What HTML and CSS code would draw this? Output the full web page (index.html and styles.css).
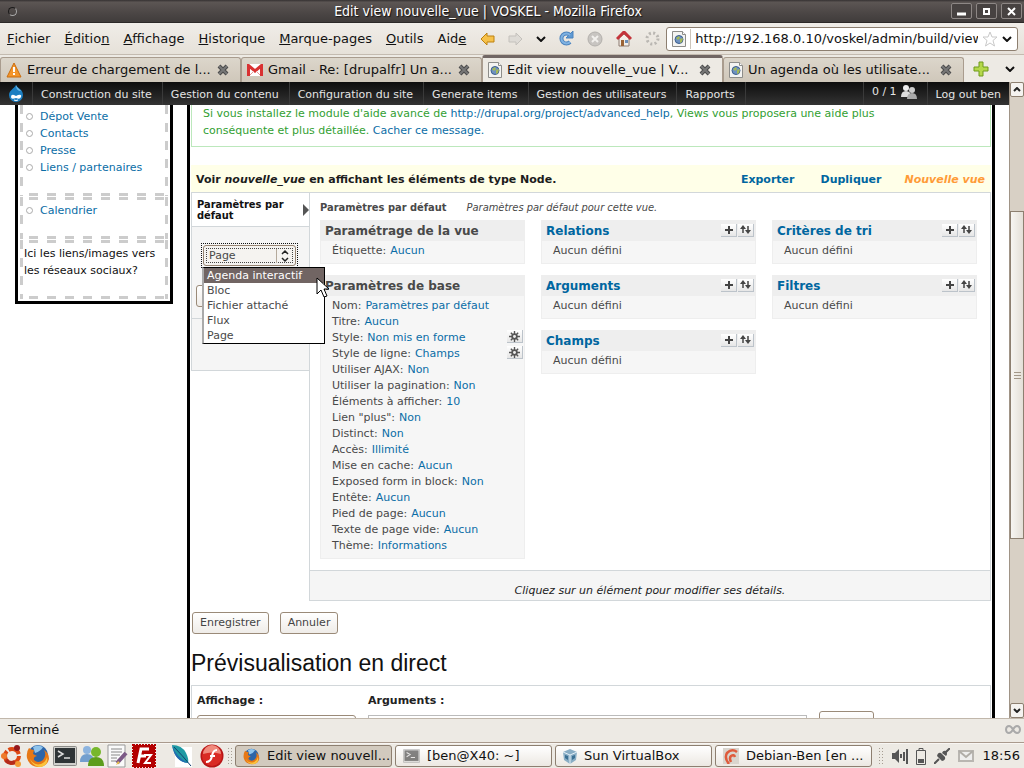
FILE: index.html
```html
<!DOCTYPE html>
<html lang="fr">
<head>
<meta charset="utf-8">
<title>Edit view nouvelle_vue | VOSKEL</title>
<link rel="stylesheet" href="styles.css">
</head>
<body>
<svg class="defs" aria-hidden="true">
  <symbol id="close" viewBox="0 0 12 12"><path d="M2 2l8 8M10 2l-8 8" stroke="#4b4b4b" stroke-width="4"/><path d="M2 2l8 8M10 2l-8 8" stroke="#777" stroke-width="2"/></symbol>
  <symbol id="chevron" viewBox="0 0 10 6"><path d="M1 1l4 4 4-4" fill="none" stroke="#111" stroke-width="2"/></symbol>
  <symbol id="globe" viewBox="0 0 14 16"><path d="M.5.5h10l3 3v12H.5z" fill="#f4f4f2" stroke="#8d8d8a"/><path d="M10.500 0.500v3h3" fill="#fff" stroke="#8d8d8a"/><circle cx="7" cy="8.500" r="4" fill="#6f92c0" stroke="#3c5f90"/><path d="M4 7l3-2 1 2-2 2zM8 8l3-1-1 4-2 1z" fill="#a5b957"/></symbol>
  <symbol id="gear" viewBox="0 0 12 12"><path d="M6 0v12M0 6h12M2 2l8 8M10 2l-8 8" stroke="#555" stroke-width="1.500"/><circle cx="6" cy="6" r="3.500" fill="#555"/><circle cx="6" cy="6" r="1.600" fill="#eee"/></symbol>
  <symbol id="add" viewBox="0 0 8 8"><path d="M4 0v8M0 4h8" stroke="#444" stroke-width="2"/></symbol>
  <symbol id="sort" viewBox="0 0 11 9"><path d="M3 8V2M8 1v6" stroke="#444" stroke-width="1.500"/><path d="M0 4l3-4 3 4zM5 5l3 4 3-4z" fill="#444"/></symbol>
  <symbol id="firefox" viewBox="0 0 24 24"><circle cx="12" cy="11" r="10" fill="#2d65a8"/><path d="M7 3q5-3 10 0-2 4-8 6z" fill="#8fc4ec"/><path d="M3 4q2 2 5 2l-1 4 4 2q-4 1-3 4 4 4 9 0 4-5 1-10 5 3 5 9-2 8-11 8-9-1-11-9Q0 8 3 4z" fill="#e77816"/><path d="M4 15q4 7 11 5 5-2 6-7 2 8-6 10-8 0-11-8z" fill="#fbc33c"/></symbol>
  <symbol id="terminal" viewBox="0 0 24 20"><rect x=".5" y=".5" width="23" height="19" rx="1" fill="#cfcfcb" stroke="#8b8b88"/><rect x="2" y="2" width="20" height="15" fill="#2e3436"/><path d="M5 5l5 3-5 3M11 12h6" fill="none" stroke="#ddd" stroke-width="1.500"/></symbol>
</svg>

<header class="titlebar">
  <span class="dot"></span>
  <h1>Edit view nouvelle_vue | VOSKEL - Mozilla Firefox</h1>
  <div class="winbtns">
    <button aria-label="Réduire"><svg width="9" height="9"><path d="M0 7h9" stroke="#fff" stroke-width="3"/></svg></button>
    <button aria-label="Agrandir"><svg width="9" height="9"><rect x="2" y="2" width="5" height="5" fill="none" stroke="#fff" stroke-width="2"/></svg></button>
    <button aria-label="Fermer"><svg width="9" height="9"><path d="M1 1l7 7M8 1l-7 7" stroke="#fff" stroke-width="2"/></svg></button>
  </div>
</header>

<nav class="menubar">
  <button><u>F</u>ichier</button><button><u>É</u>ditio<u>n</u></button><button><u>A</u>ffichage</button><button><u>H</u>istorique</button><button><u>M</u>arque-pages</button><button><u>O</u>utils</button><button>Aid<u>e</u></button>
  <div class="tools">
    <button aria-label="Précédent"><svg width="15" height="14" viewBox="0 0 15 14"><path d="M7 1L1 7l6 6v-3h7V4H7z" fill="#f6c14a" stroke="#bd8110"/></svg></button>
    <button aria-label="Suivant"><svg width="15" height="14" viewBox="0 0 15 14"><path d="M8 1l6 6-6 6v-3H1V4h7z" fill="#dedbd6" stroke="#c4c1bc"/></svg></button>
    <button aria-label="Pages récentes"><svg width="10" height="6"><use href="#chevron"/></svg></button>
    <button aria-label="Actualiser"><svg width="15" height="15" viewBox="0 0 15 15"><path d="M11 11a5 5 0 1 1 0-7" fill="none" stroke="#4c83bd" stroke-width="4"/><path d="M14 0v7H7z" fill="#5f9ad4" stroke="#4c83bd"/><path d="M11 11a5 5 0 1 1 0-7" fill="none" stroke="#7fb2e2" stroke-width="2"/></svg></button>
    <button aria-label="Arrêter"><svg width="16" height="16" viewBox="0 0 16 16"><circle cx="8" cy="8" r="7" fill="#c8c5c1" stroke="#b3b0ac"/><path d="M5 5l6 6M11 5l-6 6" stroke="#f2f0ed" stroke-width="2"/></svg></button>
    <button aria-label="Accueil"><svg width="16" height="16" viewBox="0 0 16 16"><path d="M3 7v8h10V7L8 3z" fill="#f3efe9" stroke="#8d7b70"/><path d="M1 8l7-7 7 7" fill="none" stroke="#c4343b" stroke-width="3"/><path d="M5 9h3v6H5z" fill="#9a6335"/><path d="M9 9h3v3H9z" fill="#6c8fb8"/></svg></button>
    <svg width="15" height="15" viewBox="0 0 15 15"><circle cx="7.500" cy="7.500" r="5.500" fill="none" stroke="#bab7b2" stroke-width="3" stroke-dasharray="2 2.320"/></svg>
  </div>
  <div class="urlbar">
    <svg width="14" height="16"><use href="#globe"/></svg>
    <input type="text" aria-label="Adresse" value="http://192.168.0.10/voskel/admin/build/view">
    <svg width="16" height="16" viewBox="0 0 16 16"><path d="M8 1l2 5h5l-4 3.500 1.500 5.500L8 12l-4.500 3L5 9.500 1 6h5z" fill="#fff" stroke="#c9c9c9"/></svg>
    <svg width="10" height="6"><use href="#chevron"/></svg>
  </div>
</nav>

<nav class="tabs">
  <div class="tab"><svg width="16" height="16" viewBox="0 0 16 16"><path d="M8 1l7 14H1z" fill="#f3952b" stroke="#c96d10" stroke-linejoin="round"/><path d="M8 5v5M8 11v2" stroke="#fff" stroke-width="2"/></svg><a href="#">Erreur de chargement de l...</a><button aria-label="Fermer l'onglet"><svg width="12" height="12"><use href="#close"/></svg></button></div>
  <div class="tab"><svg width="16" height="12" viewBox="0 0 16 12"><path d="M0 0h16v12H0z" fill="#fff"/><path d="M1.500 12V1.500L8 7l6.500-5.500V12" fill="none" stroke="#d93232" stroke-width="3"/><path d="M3 11l4-4M13 11L9 7" stroke="#e79a9a"/></svg><a href="#">Gmail - Re: [drupalfr] Un a...</a><button aria-label="Fermer l'onglet"><svg width="12" height="12"><use href="#close"/></svg></button></div>
  <div class="tab active"><svg width="14" height="16"><use href="#globe"/></svg><a href="#">Edit view nouvelle_vue | V...</a><button aria-label="Fermer l'onglet"><svg width="12" height="12"><use href="#close"/></svg></button></div>
  <div class="tab"><svg width="14" height="16"><use href="#globe"/></svg><a href="#">Un agenda où les utilisate...</a><button aria-label="Fermer l'onglet"><svg width="12" height="12"><use href="#close"/></svg></button></div>
  <div class="tabend">
    <button aria-label="Nouvel onglet"><svg width="16" height="16" viewBox="0 0 16 16"><path d="M6 1h4v5h5v4h-5v5H6v-5H1V6h5z" fill="#b5d84b" stroke="#6f9a1c"/></svg></button>
    <button aria-label="Liste des onglets"><svg width="10" height="6"><use href="#chevron"/></svg></button>
  </div>
</nav>

<div class="viewport">
  <div class="page">
    <nav class="admin">
      <a class="drop" href="#" aria-label="Accueil"><svg width="16" height="17" viewBox="0 0 16 17"><path d="M8 0c1 3 7 4 7 10a7 7 0 0 1-14 0C1 5 6 4 8 0z" fill="#1c7fc2"/><path d="M8 0c1 3 4 4 5 6-3 0-5-2-5-6z" fill="#6db9e6"/><path d="M3 12q0-3 3-2l2 1 2-1q4-1 3 2-1 3-5 1-5 2-5-1z" fill="#fff"/><path d="M6 15q2 1 4 0" fill="none" stroke="#fff"/></svg></a>
      <a href="#">Construction du site</a><a href="#">Gestion du contenu</a><a href="#">Configuration du site</a><a href="#">Generate items</a><a href="#">Gestion des utilisateurs</a><a href="#">Rapports</a>
      <span class="fill"></span>
      <a class="users" href="#">0 / 1 <svg width="16" height="14" viewBox="0 0 16 14"><circle cx="5" cy="3" r="3" fill="#eee"/><path d="M0 12q0-6 5-6t5 6z" fill="#ddd"/><circle cx="11" cy="5" r="3" fill="#ccc"/><path d="M6 14q0-6 5-6t5 6z" fill="#aaa"/></svg></a>
      <a href="#">Log out ben</a>
    </nav>
    <div class="cols">
      <aside>
        <div class="block links"><ul><li><a href="#">Dépot Vente</a></li><li><a href="#">Contacts</a></li><li><a href="#">Presse</a></li><li><a href="#">Liens / partenaires</a></li></ul></div>
        <div class="block cal"><ul><li><a href="#">Calendrier</a></li></ul></div>
        <div class="block social"><p>Ici les liens/images vers les réseaux sociaux?</p></div>
      </aside>
      <main>
        <p class="message">Si vous installez le module d'aide avancé de <a href="#">http://drupal.org/project/advanced_help</a>, Views vous proposera une aide plus conséquente et plus détaillée. <a href="#">Cacher ce message.</a></p>
        <div class="viewhead"><strong>Voir <em>nouvelle_vue</em> en affichant les éléments de type Node.</strong><a href="#">Exporter</a><a href="#">Dupliquer</a><em class="new">Nouvelle vue</em></div>
        <div class="editor">
          <div class="displays">
            <a class="current" href="#"><span>Paramètres par défaut</span><svg width="6" height="12"><path d="M0 0l6 6-6 6z" fill="#555"/></svg></a>
            <div class="adddisplay">
              <div class="combo">
                <select aria-label="Type d'affichage"><option>Page</option><option>Agenda interactif</option><option>Bloc</option><option>Fichier attaché</option><option>Flux</option></select>
                <svg class="updown" width="17" height="14" viewBox="0 0 17 14"><path d="M.5 0v14" stroke="#b5aa9c"/><path d="M6 5l3-3 3 3M6 9l3 3 3-3" fill="none" stroke="#222" stroke-width="1.500"/></svg>
                <ul class="options" role="listbox" aria-label="Types"><li class="hover" role="option">Agenda interactif</li><li role="option">Bloc</li><li role="option">Fichier attaché</li><li role="option">Flux</li><li role="option">Page</li></ul>
                <svg class="cursor" width="13" height="21" viewBox="0 0 13 21"><path d="M1 1v16l4-4 3 7 3-1-3-7h5z" fill="#fff" stroke="#000"/></svg>
              </div>
              <button class="btn add" aria-label="Ajouter un affichage"></button>
            </div>
            <div class="blank"></div>
          </div>
          <div class="details">
            <p class="dtitle"><strong>Paramètres par défaut</strong><em>Paramètres par défaut pour cette vue.</em></p>
            <div class="grid">
              <div class="col">
                <section><h2>Paramétrage de la vue</h2><ul><li>Étiquette: <a href="#">Aucun</a></li></ul></section>
                <section><h2>Paramètres de base</h2><ul>
                  <li>Nom: <a href="#">Paramètres par défaut</a></li>
                  <li>Titre: <a href="#">Aucun</a></li>
                  <li>Style: <a href="#">Non mis en forme</a><button class="ib" aria-label="Réglages du style"><svg width="11" height="11"><use href="#gear"/></svg></button></li>
                  <li>Style de ligne: <a href="#">Champs</a><button class="ib" aria-label="Réglages du style de ligne"><svg width="11" height="11"><use href="#gear"/></svg></button></li>
                  <li>Utiliser AJAX: <a href="#">Non</a></li>
                  <li>Utiliser la pagination: <a href="#">Non</a></li>
                  <li>Éléments à afficher: <a href="#">10</a></li>
                  <li>Lien "plus": <a href="#">Non</a></li>
                  <li>Distinct: <a href="#">Non</a></li>
                  <li>Accès: <a href="#">Illimité</a></li>
                  <li>Mise en cache: <a href="#">Aucun</a></li>
                  <li>Exposed form in block: <a href="#">Non</a></li>
                  <li>Entête: <a href="#">Aucun</a></li>
                  <li>Pied de page: <a href="#">Aucun</a></li>
                  <li>Texte de page vide: <a href="#">Aucun</a></li>
                  <li>Thème: <a href="#">Informations</a></li>
                </ul></section>
              </div>
              <div class="col">
                <section><h2><a href="#">Relations</a><span><button class="ib" aria-label="Ajouter"><svg width="8" height="8"><use href="#add"/></svg></button><button class="ib" aria-label="Réordonner"><svg width="11" height="9"><use href="#sort"/></svg></button></span></h2><ul><li>Aucun défini</li></ul></section>
                <section><h2><a href="#">Arguments</a><span><button class="ib" aria-label="Ajouter"><svg width="8" height="8"><use href="#add"/></svg></button><button class="ib" aria-label="Réordonner"><svg width="11" height="9"><use href="#sort"/></svg></button></span></h2><ul><li>Aucun défini</li></ul></section>
                <section><h2><a href="#">Champs</a><span><button class="ib" aria-label="Ajouter"><svg width="8" height="8"><use href="#add"/></svg></button><button class="ib" aria-label="Réordonner"><svg width="11" height="9"><use href="#sort"/></svg></button></span></h2><ul><li>Aucun défini</li></ul></section>
              </div>
              <div class="col">
                <section><h2><a href="#">Critères de tri</a><span><button class="ib" aria-label="Ajouter"><svg width="8" height="8"><use href="#add"/></svg></button><button class="ib" aria-label="Réordonner"><svg width="11" height="9"><use href="#sort"/></svg></button></span></h2><ul><li>Aucun défini</li></ul></section>
                <section><h2><a href="#">Filtres</a><span><button class="ib" aria-label="Ajouter"><svg width="8" height="8"><use href="#add"/></svg></button><button class="ib" aria-label="Réordonner"><svg width="11" height="9"><use href="#sort"/></svg></button></span></h2><ul><li>Aucun défini</li></ul></section>
              </div>
            </div>
            <p class="hint">Cliquez sur un élément pour modifier ses détails.</p>
          </div>
        </div>
        <div class="actions"><button class="btn">Enregistrer</button><button class="btn">Annuler</button></div>
        <h2 class="preview">Prévisualisation en direct</h2>
        <form class="live">
          <div class="f1"><label for="aff">Affichage :</label><select id="aff" class="btn" aria-label="Affichage"></select></div>
          <div class="f2"><label for="args">Arguments :</label><input id="args" type="text"></div>
          <button type="button" class="btn f3" aria-label="Aperçu"></button>
        </form>
      </main>
    </div>
  </div>
  <div class="scroll">
    <button aria-label="Défiler vers le haut"><svg width="8" height="5"><path d="M1 4l3-3 3 3" fill="none" stroke="#222" stroke-width="2"/></svg></button>
    <div class="track"><div class="thumb"><i></i><i></i><i></i></div></div>
    <button aria-label="Défiler vers le bas"><svg width="8" height="5"><path d="M1 1l3 3 3-3" fill="none" stroke="#222" stroke-width="2"/></svg></button>
  </div>
</div>

<footer class="status"><span>Terminé</span><svg width="16" height="9" viewBox="0 0 16 9"><path d="M8 4.500C6 1 5 1 4 1a3 3.500 0 0 0 0 7c1 0 2 0 4-3.500S11 1 12 1a3 3.500 0 0 1 0 7c-1 0-2 0-4-3.500z" fill="none" stroke="#aaa" stroke-width="2"/></svg></footer>

<nav class="taskbar">
  <div class="launch">
    <svg width="23" height="24" viewBox="0 0 23 24"><circle cx="12" cy="12" r="7" fill="none" stroke="#dd4814" stroke-width="4" stroke-dasharray="12.600 2"/><path d="M15 18a7 7 0 0 1-9-2" fill="none" stroke="#b52b1c" stroke-width="4"/><circle cx="4" cy="12" r="3" fill="#ee7b2c"/><circle cx="17" cy="4" r="3" fill="#93171c"/><circle cx="18" cy="20" r="3" fill="#f39a34"/></svg>
    <svg width="24" height="24"><use href="#firefox"/></svg>
    <svg width="24" height="20"><use href="#terminal"/></svg>
    <svg width="24" height="22" viewBox="0 0 24 22"><circle cx="7" cy="5" r="4" fill="#8db4df"/><path d="M0 17q0-8 7-8t7 8z" fill="#739fce"/><circle cx="16" cy="7" r="5" fill="#77b72c"/><path d="M8 21q0-9 8-9t8 9z" fill="#5d9d1c"/></svg>
    <svg width="22" height="24" viewBox="0 0 22 24"><path d="M1 1h17v22H1z" fill="#fafafa" stroke="#999"/><path d="M4 5h11M4 8h11M4 11h9M4 14h6M4 17h5" stroke="#888"/><path d="M19 9L10 19" stroke="#7c5a86" stroke-width="4"/><path d="M11 17l-2 4 4-2z" fill="#e8c34a"/></svg>
    <svg width="24" height="24" viewBox="0 0 24 24"><path d="M1 1h22v22H1z" fill="#b30000" stroke="#b30000" stroke-width="2" stroke-dasharray="2 1"/><path d="M6 19L9 5h8M8 12h6" fill="none" stroke="#fff" stroke-width="3"/><path d="M12 11h7l-6 8h6" fill="none" stroke="#fff" stroke-width="2"/></svg>
    <svg class="gap" width="22" height="24" viewBox="0 0 22 24"><path d="M4 3h17v20H4z" fill="#fff"/><path d="M1 1q10 0 14 8 3 6 2 10Q4 18 1 1z" fill="#1e9aa4"/><path d="M1 1q4 12 16 18Q4 18 1 1z" fill="#2369b0"/><path d="M3 3q8 8 17 19" fill="none" stroke="#123f6e"/></svg>
    <svg width="24" height="24" viewBox="0 0 24 24"><circle cx="12" cy="12" r="11.500" fill="#b81516"/><circle cx="12" cy="12" r="10" fill="#d92b24"/><path d="M3 10a9 9 0 0 1 18 0q-9-3-18 0z" fill="#f08a7c"/><path d="M17 6q-4 0-5 6t-6 6M10 12h5" fill="none" stroke="#fff" stroke-width="2"/></svg>
    <span class="grip"></span>
  </div>
  <div class="tasks">
    <button class="on"><svg width="17" height="17"><use href="#firefox"/></svg>Edit view nouvell...</button>
    <button><svg class="gray" width="17" height="14"><use href="#terminal"/></svg>[ben@X40: ~]</button>
    <button><svg width="14" height="15" viewBox="0 0 14 15"><path d="M7 0l7 3-1 8-6 4-6-4L0 3z" fill="#89adc4"/><path d="M0 3l7 3 7-3M7 6v9" stroke="#e4eff6" fill="none"/><path d="M2 6l3 1v4l-3-2zM12 6L9 7v4l3-2z" fill="#3b7093"/></svg>Sun VirtualBox</button>
    <button><svg width="16" height="16" viewBox="0 0 16 16"><path d="M0 0h16v16H0z" fill="#d9d5ce"/><path d="M6 16Q1 10 4 5q5-5 10-1M8 14q-2-4 0-6 3-2 4 1" fill="none" stroke="#df5b3c" stroke-width="2.500"/></svg>Debian-Ben [en ...</button>
  </div>
  <div class="tray">
    <span class="grip"></span>
    <svg width="16" height="16" viewBox="0 0 16 16"><path d="M0 5h3l4-4v14l-4-4H0z" fill="#555"/><path d="M9 6v4M12 4v9M15 1v15" stroke="#555" stroke-width="2"/></svg>
    <svg width="10" height="17" viewBox="0 0 10 17"><path d="M.5 2.500h9v14h-9zM3 2V.5h4V2" fill="none" stroke="#555"/><path d="M2 11h6v4H2z" fill="#555"/></svg>
    <svg width="16" height="16" viewBox="0 0 16 16"><path d="M0 16l5-5M16 0l-5 5" stroke="#555" stroke-width="2"/><path d="M3 8l5 5q4-1 3-4L7 5q-3-1-4 3zM8 5q1-3 4-2 2 3 0 5z" fill="#555"/></svg>
    <svg width="16" height="12" viewBox="0 0 16 12"><path d="M1 1h14v10H1z" fill="#eee" stroke="#b9b6b1" stroke-width="2"/><path d="M1 1l7 6 7-6" fill="none" stroke="#b0ada8" stroke-width="2"/></svg>
    <time>18:56</time>
  </div>
</nav>
</body>
</html>
```
FILE: styles.css
```css
*, *::before { box-sizing: border-box; }
html, body { height: 100%; }
body { margin: 0; display: flex; flex-direction: column; overflow: hidden; background: #edeae4; color: #111; font: 11px/16px "DejaVu Sans", sans-serif; }
button, input, select { font: inherit; color: inherit; margin: 0; }
button { padding: 0; border: 0; background: none; display: flex; align-items: center; justify-content: center; white-space: nowrap; }
svg { display: block; flex: none; }
ul, p, h1, h2 { margin: 0; padding: 0; list-style: none; }
a { color: #0a6da6; text-decoration: none; }
.defs { width: 0; height: 0; position: absolute; }

.titlebar { flex: none; height: 23px; display: flex; align-items: center; padding: 0 2px 0 8px; background: linear-gradient(#353132, #5c5654 10%, #4b4645 60%, #403c3b); border-bottom: 1px solid #2c2928; }
.titlebar h1 { flex: 1; padding-left: 8px; text-align: center; color: #fff; font: 14px/20px "DejaVu Sans Condensed", "DejaVu Sans", sans-serif; text-shadow: 1px 1px 1px #111; }
.dot { width: 9px; height: 9px; border: 1px solid #999; border-color: #1c1b1b #aaa #aaa #1c1b1b; border-radius: 50%; }
.winbtns { display: flex; gap: 4px; }
.winbtns button { width: 21px; height: 16px; border: 1px solid #8d8785; border-radius: 2px; background: #474241; }

.menubar { flex: none; height: 32px; display: flex; align-items: center; gap: 14px; padding: 0 6px 0 7px; background: linear-gradient(#f0ede8, #e6e1d9); border-bottom: 1px solid #c4bbb0; font-size: 13px; line-height: 20px; }
.tools { display: flex; align-items: center; gap: 13px; }
.urlbar { flex: 1; min-width: 0; height: 24px; margin-left: -8px; padding: 0 5px; display: flex; align-items: center; gap: 4px; border: 1px solid #8d7f70; border-radius: 3px; background: #fff; }
.urlbar input { flex: 1; min-width: 0; height: 20px; padding: 0 0 0 4px; border: 0; border-left: 1px solid #ccc5bb; background: none; outline: 0; }

.tabs { flex: none; height: 27px; display: flex; align-items: stretch; font-size: 13px; line-height: 22px; }
.tab { flex: 1; min-width: 0; margin-top: 2px; display: flex; align-items: center; gap: 5px; padding: 0 11px 0 5px; background: linear-gradient(#dcd6cb, #cfc7ba); border: 1px solid #a99c8e; border-bottom: 0; border-radius: 3px 3px 0 0; }
.tab a { flex: 1; color: #111; white-space: nowrap; }
.tab.active { margin-top: 0; background: #edeae4; border-top: 3px solid #716664; }
.tabend { flex: none; width: 60px; display: flex; align-items: center; justify-content: space-between; padding: 0 9px; }

.viewport { flex: 1; min-height: 0; display: flex; background: #fff; }
.page { flex: 1; min-width: 0; overflow: hidden; display: flex; flex-direction: column; }
.admin { flex: none; height: 23px; display: flex; background: linear-gradient(#0d0d0d, #333); }
.admin a { display: flex; align-items: center; gap: 4px; padding: 2px 10px 0 8px; border-right: 1px solid #3a3a3a; color: #e4e4e4; white-space: nowrap; }
.admin .drop { padding: 0 8px; }
.admin .fill { flex: 1; border-right: 1px solid #3a3a3a; }
.admin .users { padding-bottom: 3px; padding-top: 0; }
.admin a:last-child { border: 0; padding-right: 8px; }

.cols { display: flex; align-items: flex-start; gap: 14px; padding: 0 14px 0 15px; }
aside { flex: none; width: 158px; border: 3px solid #000; border-top: 0; padding: 0 2px 2px; }
.block { border: 3px solid transparent; margin-bottom: 1px; background:
  repeating-linear-gradient(90deg, transparent 0 9px, #ccc 9px 18px) left top / 100% 3px no-repeat border-box,
  repeating-linear-gradient(90deg, transparent 0 9px, #ccc 9px 18px) left bottom / 100% 3px no-repeat border-box,
  repeating-linear-gradient(#ccc 0 9px, transparent 9px 18px) left bottom / 3px 100% no-repeat border-box,
  repeating-linear-gradient(#ccc 0 9px, transparent 9px 18px) right bottom / 3px 100% no-repeat border-box; }
.block.links { height: 91px; border-top: 0; padding-top: 3px; background-size: 0 0, 100% 3px, 3px 100%, 3px 100%; }
.block.cal { height: 42px; padding-top: 2px; }
.block.social { height: 59px; padding-top: 2px; line-height: 17px; margin: 0; }
.block p { padding-left: 1px; }
.block li { display: flex; align-items: center; gap: 7px; padding-left: 3px; line-height: 17px; }
.block li::before { content: ""; width: 7px; height: 7px; border: 1px solid #aaa; border-radius: 50%; }

main { flex: 1; min-width: 0; border: solid #000; border-width: 0 3px; padding: 0 1px; color: #494949; }
.message { padding: 0 60px 7px 11px; border: 1px solid #bce8bc; border-top: 0; color: #32a032; line-height: 17px; }
.viewhead { margin-top: 18px; height: 27px; padding: 2px 6px 0 5px; display: flex; align-items: center; background: #ffffe8; font-weight: bold; color: #1c1c1c; }
.viewhead strong { flex: 1; }
.viewhead a, .viewhead .new { margin-left: 26px; }
.viewhead a { color: #0066a0; }
.viewhead .new { color: #ff9b38; margin-left: 23px; }
.editor { display: flex; align-items: flex-start; border-top: 1px solid #d2d7da; }
.displays { flex: none; width: 118px; border: solid #d2d7da; border-width: 0 0 0 1px; }
.current { height: 33px; display: flex; align-items: center; justify-content: space-between; padding: 0 0 0 5px; color: #111; font: bold 11px/11px "DejaVu Sans Condensed", "DejaVu Sans", sans-serif; }
.current span { width: 96px; }
.adddisplay { height: 93px; padding: 16px 4px 0; background: #f5f5f5; border: solid #d2d7da; border-width: 1px 0; }
.combo { position: relative; width: 97px; height: 25px; margin-left: 5px; padding: 1px; border: 1px dotted #111; }
.combo select { appearance: none; display: block; width: 93px; height: 21px; padding: 1px 0 0 5px; border: 1px solid #968472; border-radius: 3px; background: #f5f3f0; outline: 1px dotted #444; outline-offset: -4px; }
.updown { position: absolute; right: 4px; top: 5px; }
.options { position: absolute; z-index: 2; left: 0; top: 23px; width: 123px; border: 1px solid #000; border-left: 2px solid #aaa; background: #fff; line-height: 15px; }
.options li { padding-left: 3px; }
.options .hover { background: #716563; color: #fff; }
.cursor { position: absolute; z-index: 3; left: 114px; top: 33px; }
.blank { height: 52px; background: #f5f5f5; border-bottom: 1px solid #d2d7da; }
.details { flex: 1; min-width: 0; border: 1px solid #d2d7da; border-top: 0; }
.dtitle { display: flex; gap: 20px; padding: 7px 10px 4px; font-family: "DejaVu Sans Condensed", "DejaVu Sans", sans-serif; }
.grid { display: grid; grid-template-columns: 1fr 215px 1fr; gap: 16px; padding: 0 13px 11px 10px; }
.col { display: flex; flex-direction: column; gap: 11px; }
section { background: #f6f6f6; border: 1px solid #eee; border-top: 0; }
section h2 { height: 21px; padding: 1px 1px 0 4px; display: flex; justify-content: space-between; align-items: center; background: #eee; font-size: 12px; line-height: 18px; }
section h2 a { color: #0066a0; }
section h2 span { display: flex; gap: 1px; margin-top: -2px; }
section ul { padding: 2px 0 4px 11px; }
section li { display: flex; gap: 4px; }
.ib { width: 16px; height: 13px; border: solid #bcc3ca; border-width: 0 1px 1px 0; background: linear-gradient(#fff, #e6e6e6); }
li .ib { margin-left: auto; margin-right: 1px; }
.hint { height: 30px; padding-top: 12px; background: #f5f5f5; border-top: 1px solid #d2d7da; text-align: center; font-style: italic; color: #222; }
.btn { height: 22px; padding: 0 7px; border: 1px solid #9a8a78; border-radius: 3px; background: linear-gradient(#fff, #efece8); color: #444; }
.add { width: 106px; margin-top: 17px; }
.actions { display: flex; gap: 11px; margin-top: 11px; padding-left: 1px; }
.preview { margin-top: 17px; color: #111; font: 23px/24px "Liberation Sans", sans-serif; }
.live { margin-top: 10px; border: 1px solid #d2d7da; display: flex; align-items: flex-end; gap: 12px; padding: 7px 116px 30px 5px; font-weight: bold; color: #222; }
.live div { display: flex; flex-direction: column; gap: 6px; }
.live input { height: 22px; border: 1px solid #bbb; }
.f1 { width: 159px; }
.f1 select { appearance: none; }
.f2 { flex: 1; }
.f3 { width: 55px; margin-bottom: 4px; }

.scroll { flex: none; width: 15px; display: flex; flex-direction: column; background: #d8d0c5; border-left: 1px solid #a09486; }
.scroll button { height: 15px; flex: none; border: 1px solid #8d7f70; border-radius: 2px; background: #f5f3f0; }
.track { flex: 1; padding-top: 114px; }
.thumb { height: 328px; display: flex; flex-direction: column; align-items: center; justify-content: center; gap: 2px; border: 1px solid #8d7f70; background: linear-gradient(90deg, #f7f5f2, #e4dfd7); }
.thumb i { width: 7px; height: 1px; background: #a39788; }

.status { flex: none; height: 25px; display: flex; align-items: center; justify-content: space-between; padding: 0 3px 2px 8px; border-top: 1px solid #c1b7ab; border-bottom: 1px solid #a99a8d; font-size: 13px; line-height: 20px; }
.taskbar { flex: none; height: 25px; display: flex; align-items: center; font-size: 13px; border-top: 1px solid #f8f6f3; }
.launch { display: flex; align-items: center; gap: 3px; width: 233px; }
.gap { margin-left: 12px; margin-right: 4px; }
.grip { width: 6px; height: 18px; background: radial-gradient(#a69d92 35%, transparent 40%) 0 0 / 3px 3px; }
.tasks { flex: 1; min-width: 0; display: flex; gap: 3px; padding: 0 2px; }
.tasks button { flex: 1; justify-content: flex-start; height: 22px; gap: 7px; padding-left: 7px; border: 1px solid #8d7f70; border-radius: 3px; background: linear-gradient(#fff, #ece8e2); }
.tasks .on { background: #d2cabe; }
.gray { filter: grayscale(1) opacity(60%); }
.tray { flex: none; display: flex; align-items: center; width: 150px; justify-content: space-between; padding: 0 4px; }
```
